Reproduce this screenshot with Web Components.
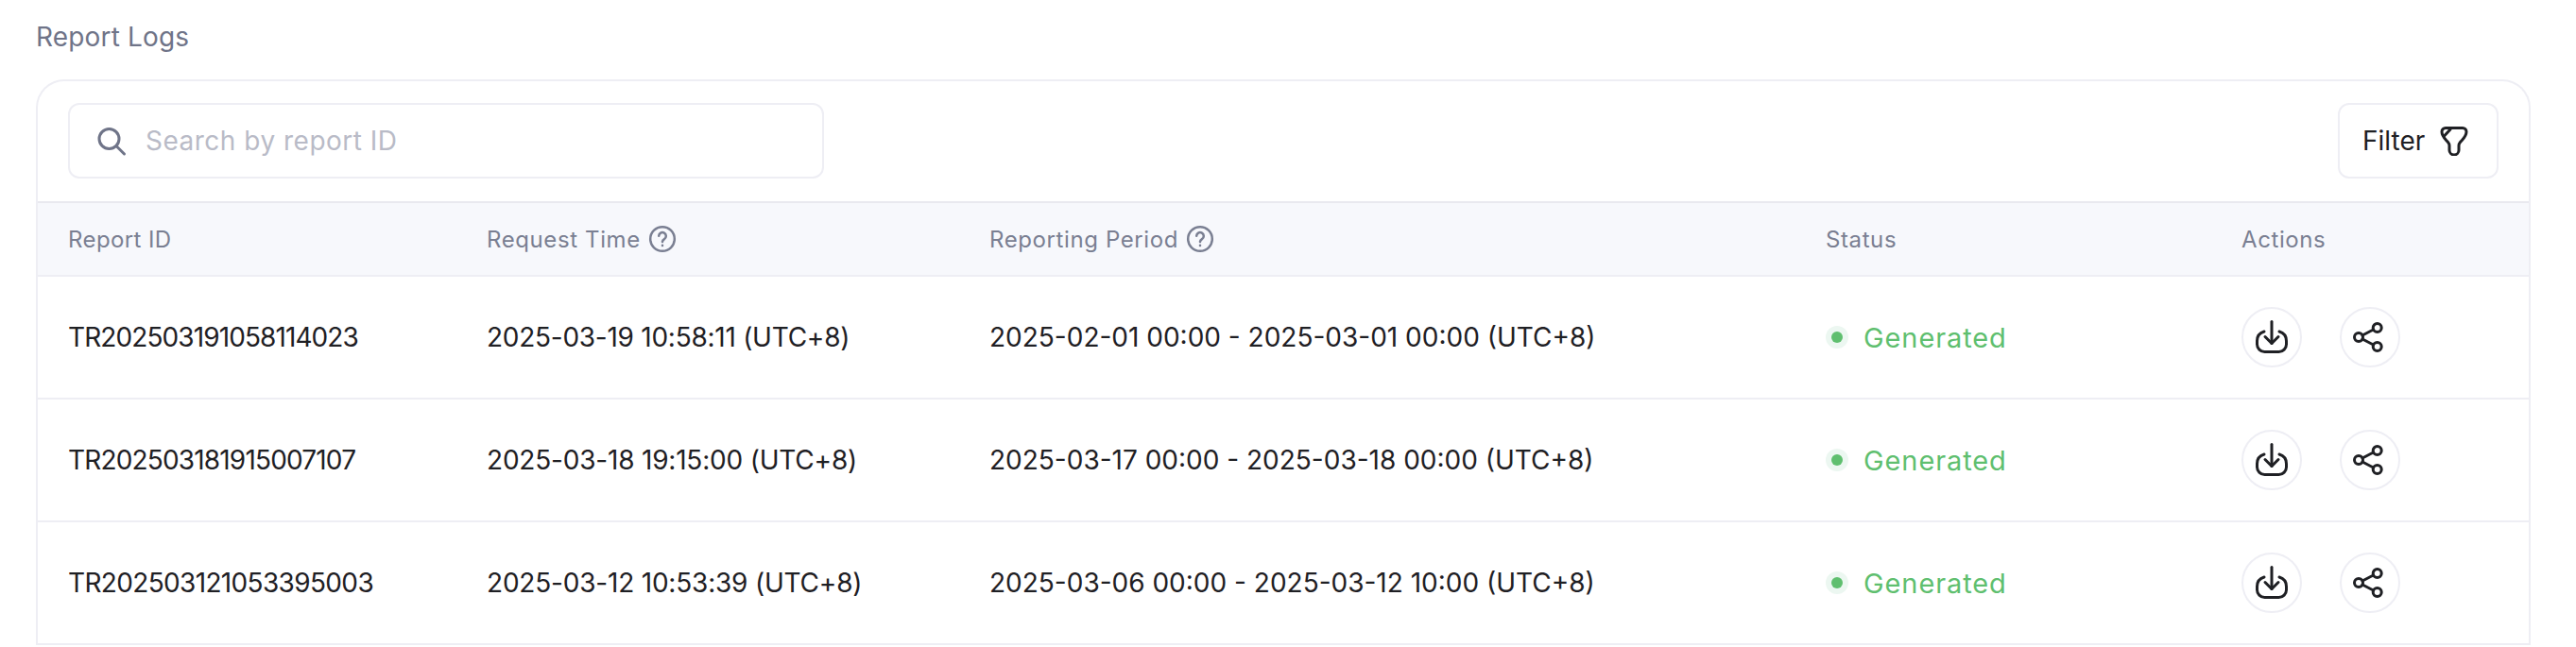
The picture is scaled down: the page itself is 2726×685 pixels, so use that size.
<!DOCTYPE html>
<html>
<head>
<meta charset="utf-8">
<title>Report Logs</title>
<style>
  html, body { margin: 0; background: #fff; }
  body { font-family: "Inter", "Liberation Sans", sans-serif; overflow: hidden; height: 685px; }
</style>
</head>
<body>
<report-logs></report-logs>

<script>
const ICONS = {
  search: `<svg width="34" height="34" viewBox="0 0 34 34" fill="none" stroke="#6f7488" stroke-width="3" stroke-linecap="round"><circle cx="13.500" cy="15" r="10.500"/><path d="M21.500 23 L29.500 31"/></svg>`,
  help: `<svg width="30" height="30" viewBox="0 0 30 30" fill="none" stroke="#7a7f92" stroke-width="2.500" stroke-linecap="round" stroke-linejoin="round"><circle cx="15" cy="15" r="12.800"/><path d="M11.200 11.800a3.800 3.800 0 1 1 5.800 3.300c-1.300.8-2 1.500-2 2.900"/><path d="M15 21.800v.1"/></svg>`,
  filter: `<svg width="31" height="32" viewBox="0 0 31 32" fill="none" stroke="#1f2024" stroke-width="3" stroke-linecap="round" stroke-linejoin="round"><path d="M7 2.500H25a4 4 0 0 1 4 4c0 5-4 8-6.500 11-.8 1-1.500 2-1.500 3.500V26a5 5 0 0 1-10 0V21c0-1.500-.7-2.500-1.500-3.500C7 14.500 3 11.500 3 6.500a4 4 0 0 1 4-4z"/><path d="M12 4L5.500 11"/></svg>`,
  download: `<svg width="36" height="38" viewBox="0 0 36 38" fill="none" stroke="#1f2024" stroke-width="3" stroke-linecap="round" stroke-linejoin="round"><path d="M18 2.500v23"/><path d="M11 18.500l7 7 7-7"/><path d="M10 13C5 14.500 2.500 18 2.500 23v3.500a8 8 0 0 0 8 8h15a8 8 0 0 0 8-8V23c0-5-2.500-8.500-7.500-10"/></svg>`,
  share: `<svg width="36" height="36" viewBox="0 0 36 36" fill="none" stroke="#1f2024" stroke-width="3" stroke-linecap="round"><circle cx="6" cy="18" r="4.500"/><circle cx="25.700" cy="8" r="4.500"/><circle cx="25.700" cy="28" r="4.500"/><path d="M10 16l11.500-6M10 20l11.500 6"/></svg>`
};

class SearchBox extends HTMLElement {
  constructor() {
    super();
    this.attachShadow({ mode: "open" });
    this.shadowRoot.innerHTML = `
      <style>
        :host { display: flex; align-items: center; box-sizing: border-box; width: 800px; height: 80px; border: 2px solid #eeeef4; border-radius: 12px; padding-left: 28px; gap: 18px; }
        svg { display: block; }
        span { font-size: 28px; color: #b9bbc7; letter-spacing: 0.5px; white-space: nowrap; }
      </style>
      ${ICONS.search}<span>${this.getAttribute("placeholder")}</span>`;
  }
}
customElements.define("search-box", SearchBox);

class FilterButton extends HTMLElement {
  constructor() {
    super();
    this.attachShadow({ mode: "open" });
    this.shadowRoot.innerHTML = `
      <style>
        :host { display: flex; align-items: center; box-sizing: border-box; width: 170px; height: 80px; border: 2px solid #eeeef4; border-radius: 12px; padding-left: 24px; gap: 15px; }
        svg { display: block; }
        span { font-size: 28px; color: #1f2024; white-space: nowrap; }
      </style>
      <span><slot></slot></span>${ICONS.filter}`;
  }
}
customElements.define("filter-button", FilterButton);

class StatusBadge extends HTMLElement {
  constructor() {
    super();
    this.attachShadow({ mode: "open" });
    this.shadowRoot.innerHTML = `
      <style>
        :host { display: flex; align-items: center; gap: 16px; font-size: 29px; letter-spacing: 0.9px; color: #5fbf6f; white-space: nowrap; }
        i { display: flex; align-items: center; justify-content: center; width: 24px; height: 24px; border-radius: 50%; background: #ecf7f1; }
        i::after { content: ""; width: 12px; height: 12px; border-radius: 50%; background: #5fbf6f; }
      </style>
      <i></i><slot></slot>`;
  }
}
customElements.define("status-badge", StatusBadge);

class IconButton extends HTMLElement {
  constructor() {
    super();
    this.attachShadow({ mode: "open" });
    this.shadowRoot.innerHTML = `
      <style>
        :host { display: flex; align-items: center; justify-content: center; box-sizing: border-box; width: 64px; height: 64px; border: 2px solid #eeeef4; border-radius: 50%; }
        svg { display: block; }
      </style>
      ${ICONS[this.getAttribute("icon")]}`;
  }
}
customElements.define("icon-button", IconButton);

class LogHead extends HTMLElement {
  constructor() {
    super();
    this.attachShadow({ mode: "open" });
    this.shadowRoot.innerHTML = `
      <style>
        :host { display: grid; grid-template-columns: 475px 532px 885px 440px 1fr; align-items: center; box-sizing: border-box; height: 80px; background: #f7f8fc; border-top: 2px solid #e9e9ef; border-bottom: 2px solid #eeeef4; font-size: 24px; letter-spacing: 0.6px; color: #7a7f92; }
        div { display: flex; align-items: center; gap: 8px; white-space: nowrap; }
        div:first-of-type { padding-left: 32px; letter-spacing: 0.4px; }
        svg { display: block; }
      </style>
      <div>Report ID</div>
      <div>Request Time ${ICONS.help}</div>
      <div>Reporting Period ${ICONS.help}</div>
      <div>Status</div>
      <div>Actions</div>`;
  }
}
customElements.define("log-head", LogHead);

class LogRow extends HTMLElement {
  constructor() {
    super();
    this.attachShadow({ mode: "open" });
    this.shadowRoot.innerHTML = `
      <style>
        :host { display: grid; grid-template-columns: 475px 532px 885px 440px 1fr; align-items: center; box-sizing: border-box; height: 130px; border-bottom: 2px solid #eeeef4; font-size: 28px; color: #1f2024; white-space: nowrap; }
        div:first-of-type { padding-left: 32px; letter-spacing: var(--id-track, 0); }
        div:nth-of-type(2) { letter-spacing: var(--time-track, 0); }
        .actions { display: flex; gap: 40px; }
      </style>
      <div>${this.getAttribute("report-id")}</div>
      <div>${this.getAttribute("time")}</div>
      <div>${this.getAttribute("period")}</div>
      <div><status-badge>${this.getAttribute("status")}</status-badge></div>
      <div class="actions"><icon-button icon="download"></icon-button><icon-button icon="share"></icon-button></div>`;
  }
}
customElements.define("log-row", LogRow);

class ReportLogs extends HTMLElement {
  constructor() {
    super();
    this.attachShadow({ mode: "open" });
    // tracking per row: the reference font has a much narrower "1"
    this.shadowRoot.innerHTML = `
      <style>
        :host { display: block; padding: 19px 48px 0 38px; }
        h2 { margin: 0 0 25px; height: 40px; line-height: 40px; font-size: 28px; font-weight: 400; letter-spacing: 0.16px; color: #6f7488; }
        .card { border: 2px solid #eeeef4; border-bottom: 0; border-radius: 30px 30px 0 0; }
        .bar { display: flex; justify-content: space-between; align-items: center; padding: 23px 32px 24px; }
      </style>
      <h2>Report Logs</h2>
      <div class="card">
        <div class="bar">
          <search-box placeholder="Search by report ID"></search-box>
          <filter-button>Filter</filter-button>
        </div>
        <log-head></log-head>
        <log-row style="--id-track:-0.9px;--time-track:-0.26px" report-id="TR202503191058114023" time="2025-03-19 10:58:11 (UTC+8)" period="2025-02-01 00:00 - 2025-03-01 00:00 (UTC+8)" status="Generated"></log-row>
        <log-row style="--id-track:-0.83px;--time-track:-0.2px" report-id="TR202503181915007107" time="2025-03-18 19:15:00 (UTC+8)" period="2025-03-17 00:00 - 2025-03-18 00:00 (UTC+8)" status="Generated"></log-row>
        <log-row style="--id-track:-0.65px;--time-track:-0.2px" report-id="TR202503121053395003" time="2025-03-12 10:53:39 (UTC+8)" period="2025-03-06 00:00 - 2025-03-12 10:00 (UTC+8)" status="Generated"></log-row>
      </div>`;
  }
}
customElements.define("report-logs", ReportLogs);
</script>
</body>
</html>
